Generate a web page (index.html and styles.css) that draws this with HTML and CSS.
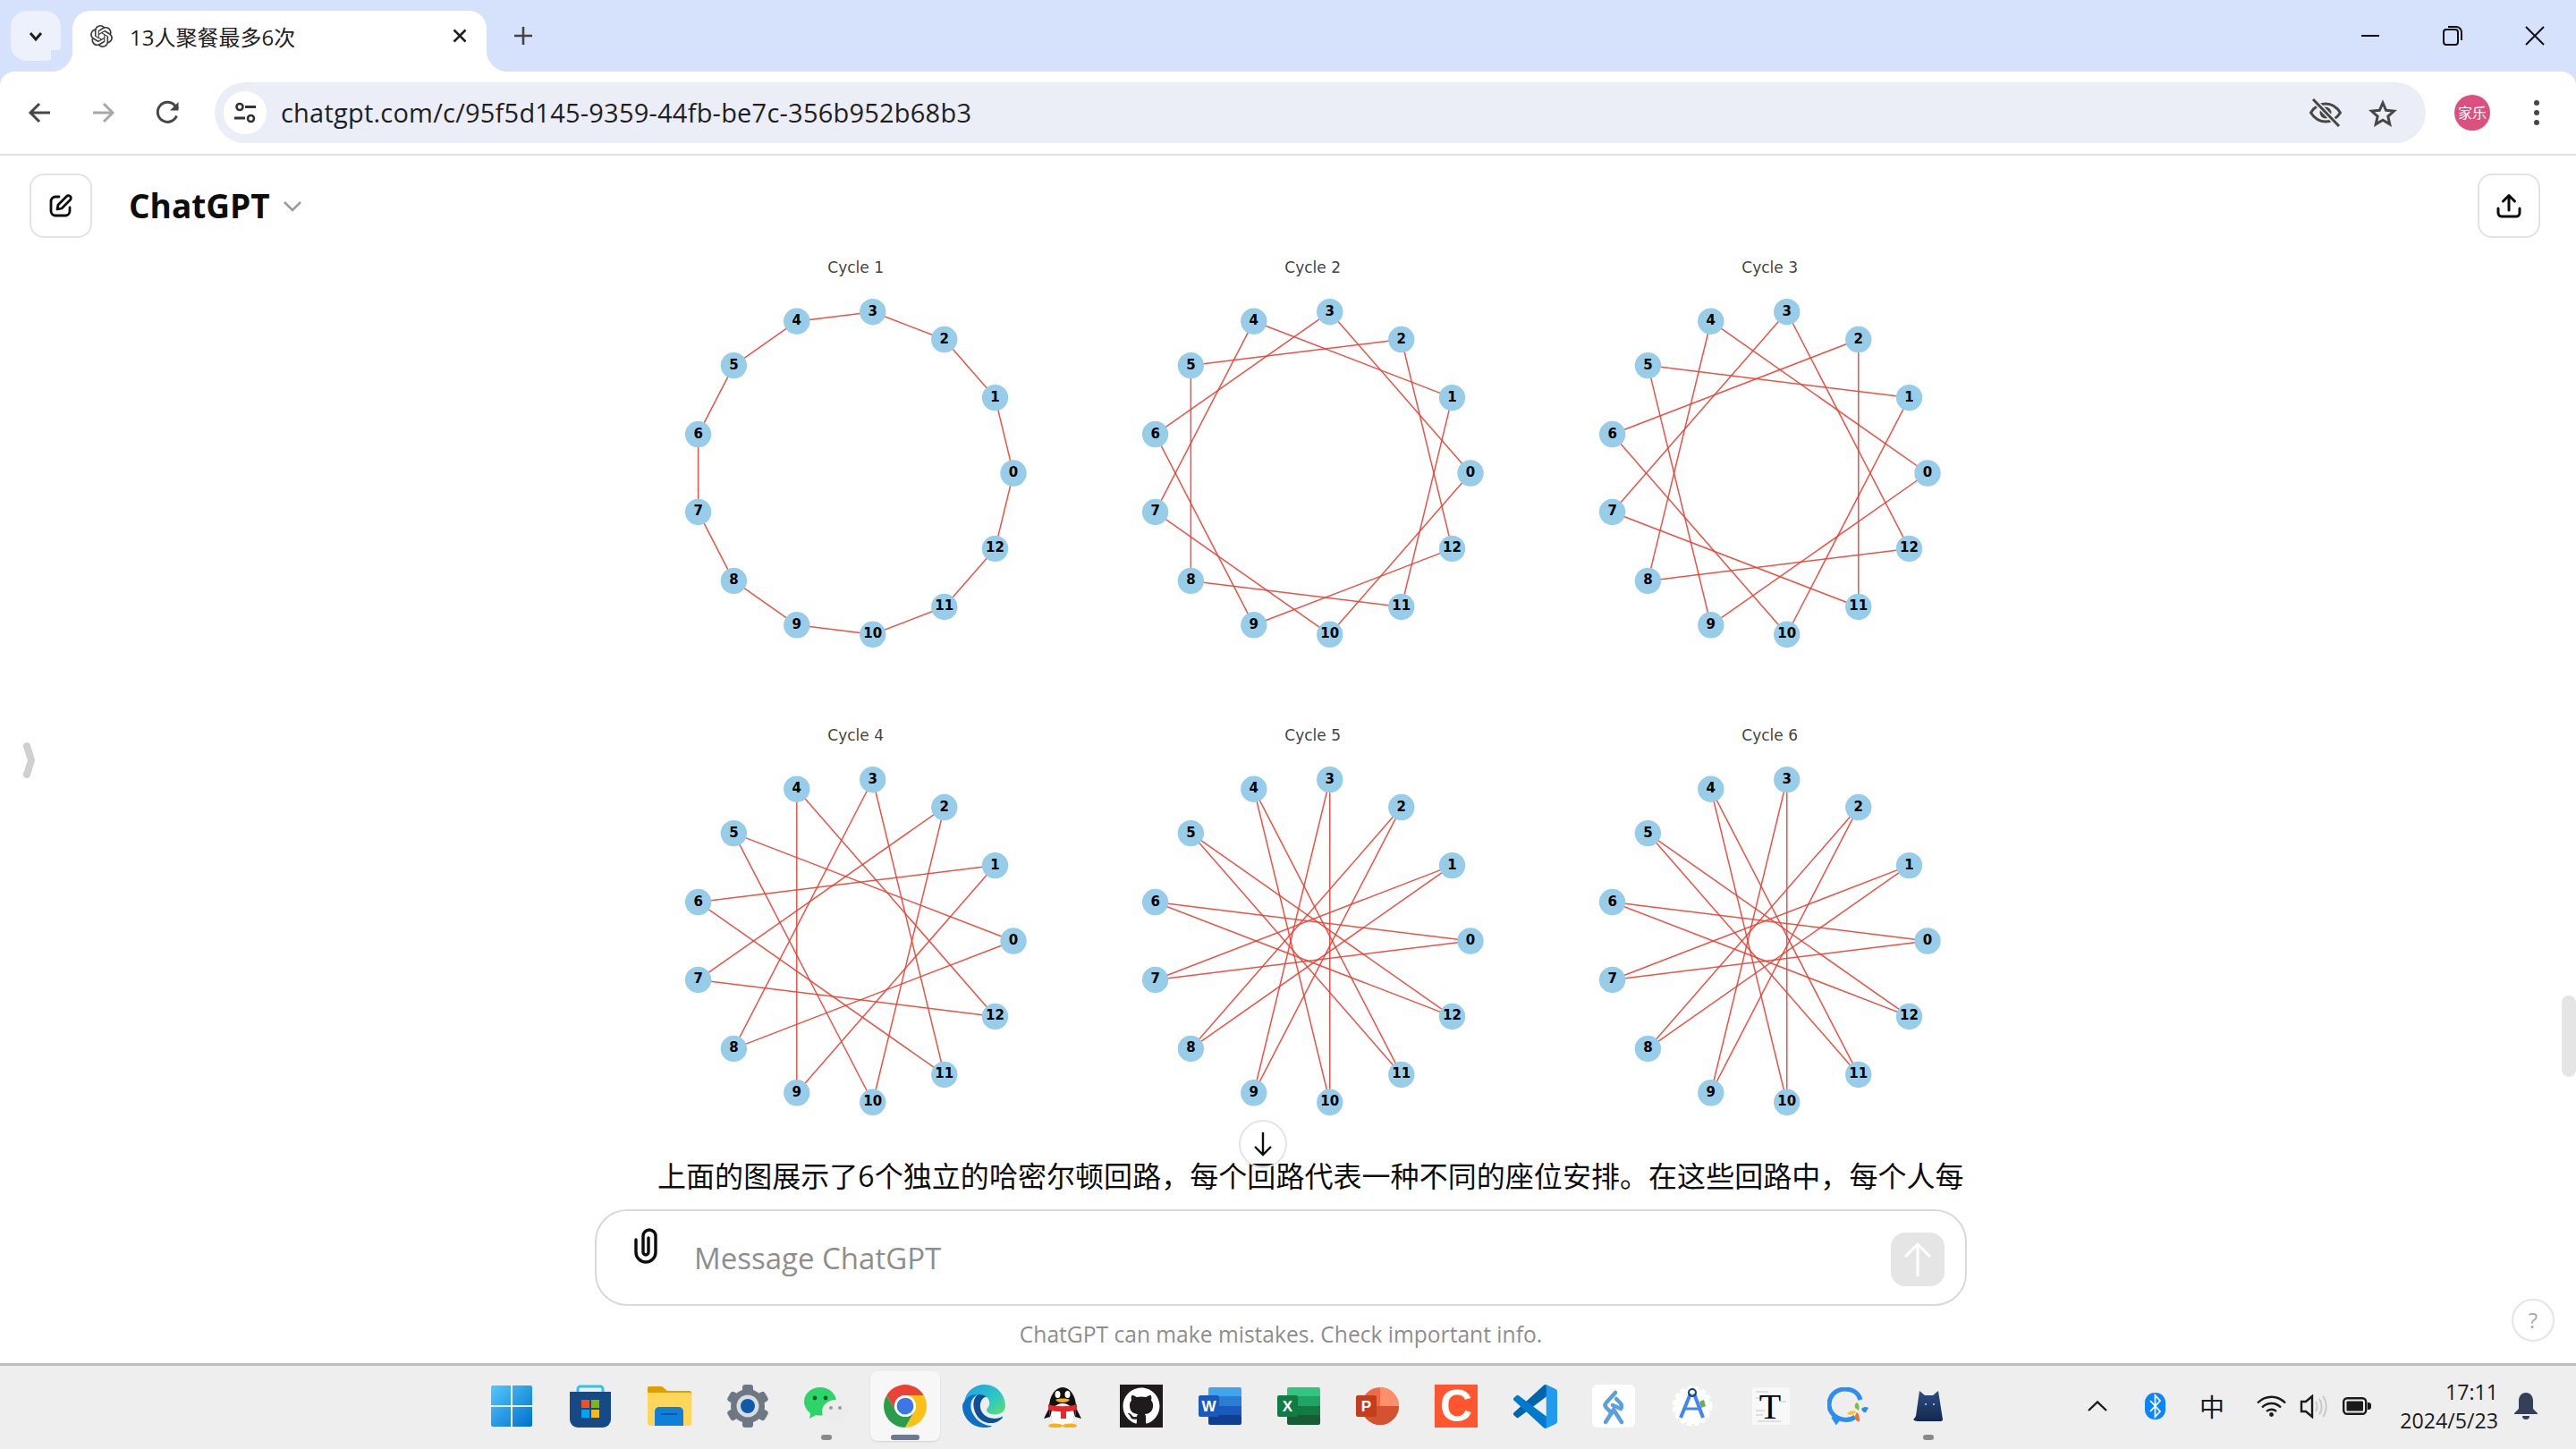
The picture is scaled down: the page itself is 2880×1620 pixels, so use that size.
FILE: index.html
```html
<!DOCTYPE html>
<html lang="zh-CN">
<head>
    <meta charset="UTF-8">
    <meta name="viewport" content="width=device-width, initial-scale=1.0">
    <title>13人聚餐最多6次</title>
    <link rel="stylesheet" href="styles.css">
</head>
<body>
    <div class="tabstrip">
        <div class="tab-list">
            <svg width="20" height="20" viewBox="0 0 20 20"><path d="M4 7l6 7 6-7" fill="none" stroke="#1f1f1f" stroke-width="3"/></svg>
        </div>
        <div class="tab">
            <svg width="25" height="25" viewBox="0 0 24 24"><path fill="#3c3c3c" d="M22.2819 9.8211a5.9847 5.9847 0 0 0-.5157-4.9108 6.0462 6.0462 0 0 0-6.5098-2.9A6.0651 6.0651 0 0 0 4.9807 4.1818a5.9847 5.9847 0 0 0-3.9977 2.9 6.0462 6.0462 0 0 0 .7427 7.0966 5.98 5.98 0 0 0 .511 4.9107 6.051 6.051 0 0 0 6.5146 2.9001A5.9847 5.9847 0 0 0 13.2599 24a6.0557 6.0557 0 0 0 5.7718-4.2058 5.9894 5.9894 0 0 0 3.9977-2.9001 6.0557 6.0557 0 0 0-.7475-7.0729zm-9.022 12.6081a4.4755 4.4755 0 0 1-2.8764-1.0408l.1419-.0804 4.7783-2.7582a.7948.7948 0 0 0 .3927-.6813v-6.7369l2.02 1.1686a.071.071 0 0 1 .038.052v5.5826a4.504 4.504 0 0 1-4.4945 4.4944zm-9.6607-4.1254a4.4708 4.4708 0 0 1-.5346-3.0137l.142.0852 4.783 2.7582a.7712.7712 0 0 0 .7806 0l5.8428-3.3685v2.3324a.0804.0804 0 0 1-.0332.0615L9.74 19.9502a4.4992 4.4992 0 0 1-6.1408-1.6464zM2.3408 7.8956a4.485 4.485 0 0 1 2.3655-1.9728V11.6a.7664.7664 0 0 0 .3879.6765l5.8144 3.3543-2.0201 1.1685a.0757.0757 0 0 1-.071 0l-4.8303-2.7865A4.504 4.504 0 0 1 2.3408 7.872zm16.5963 3.8558L13.1038 8.364 15.1192 7.2a.0757.0757 0 0 1 .071 0l4.8303 2.7913a4.4944 4.4944 0 0 1-.6765 8.1042v-5.6772a.79.79 0 0 0-.407-.667zm2.0107-3.0231l-.142-.0852-4.7735-2.7818a.7759.7759 0 0 0-.7854 0L9.409 9.2297V6.8974a.0662.0662 0 0 1 .0284-.0615l4.8303-2.7866a4.4992 4.4992 0 0 1 6.6802 4.66zM8.3065 12.863l-2.02-1.1638a.0804.0804 0 0 1-.038-.0567V6.0742a4.4992 4.4992 0 0 1 7.3757-3.4537l-.142.0805L8.704 5.459a.7948.7948 0 0 0-.3927.6813zm1.0976-2.3654l2.602-1.4998 2.6069 1.4998v2.9994l-2.5974 1.4997-2.6067-1.4997Z"/></svg>
            <span class="tab-title">13人聚餐最多6次</span>
            <svg class="tab-close" width="16" height="16" viewBox="0 0 16 16"><path d="M1.5 1.5l13 13M14.5 1.5l-13 13" stroke="#1f1f1f" stroke-width="2.6"/></svg>
        </div>
        <div class="new-tab">
            <svg width="22" height="22" viewBox="0 0 22 22"><path d="M11 1v20M1 11h20" stroke="#444" stroke-width="2.6"/></svg>
        </div>
        <div class="window-controls">
            <div class="window-btn"><svg width="22" height="22" viewBox="0 0 22 22"><path d="M1 11h20" stroke="#111" stroke-width="2"/></svg></div>
            <div class="window-btn"><svg width="22" height="22" viewBox="0 0 22 22"><rect x="1" y="4" width="16" height="17" rx="3" fill="none" stroke="#111" stroke-width="2"/><path d="M6 1h9a6 6 0 0 1 6 6v9" fill="none" stroke="#111" stroke-width="2"/></svg></div>
            <div class="window-btn"><svg width="22" height="22" viewBox="0 0 22 22"><path d="M1 1l20 20M21 1L1 21" stroke="#111" stroke-width="2"/></svg></div>
        </div>
    </div>

    <div class="toolbar">
        <div class="tool-btn"><svg width="26" height="24" viewBox="0 0 26 24"><path d="M25 12H3M13 2L3 12l10 10" fill="none" stroke="#474747" stroke-width="3"/></svg></div>
        <div class="tool-btn"><svg width="26" height="24" viewBox="0 0 26 24"><path d="M1 12h22M13 2l10 10-10 10" fill="none" stroke="#a8a8a8" stroke-width="3"/></svg></div>
        <div class="tool-btn"><svg width="28" height="28" viewBox="0 0 28 28"><path d="M23.5 17.5A11 11 0 1 1 21.5 6L25 9.5" fill="none" stroke="#474747" stroke-width="3"/><path d="M25.5 2v9.5H16z" fill="#474747"/></svg></div>
        <div class="address">
            <div class="site-icon">
                <svg width="26" height="26" viewBox="0 0 26 26"><circle cx="7" cy="6.5" r="3.5" fill="none" stroke="#333" stroke-width="2.6"/><path d="M13 6.5h12M1 19h12" stroke="#333" stroke-width="3"/><circle cx="19.5" cy="19.5" r="3.5" fill="none" stroke="#333" stroke-width="2.6"/></svg>
            </div>
            <span class="url">chatgpt.com/c/95f5d145-9359-44fb-be7c-356b952b68b3</span>
            <svg class="addr-eye" width="36" height="32" viewBox="0 0 36 32"><path d="M1.5 16C6 9 11.500 6 18 6s12 3 16.500 10C30 23 24.500 26 18 26S6 23 1.500 16z" fill="none" stroke="#474747" stroke-width="3"/><circle cx="18" cy="16" r="6.500" fill="#474747"/><path d="M4 1l29 30" stroke="#ebeef7" stroke-width="6"/><path d="M4 1l29 30" stroke="#474747" stroke-width="3"/></svg>
            <svg class="addr-star" width="32" height="31" viewBox="0 0 32 31"><path d="M16 4l3.600 8.300 9 .8-6.800 6 2 8.800L16 23.300 8.200 27.900l2-8.800-6.800-6 9-.8z" fill="none" stroke="#474747" stroke-width="3"/></svg>
        </div>
        <div class="tool-btn profile-btn"><span class="avatar">家乐</span></div>
        <div class="tool-btn"><svg width="8" height="30" viewBox="0 0 8 30"><circle cx="4" cy="4" r="3" fill="#474747"/><circle cx="4" cy="15" r="3" fill="#474747"/><circle cx="4" cy="26" r="3" fill="#474747"/></svg></div>
    </div>

    <main class="chat">
        <header class="chat-head">
            <div class="head-btn">
                <svg width="28" height="28" viewBox="0 0 28 28"><path d="M12 4H8a5 5 0 0 0-5 5v11a5 5 0 0 0 5 5h11a5 5 0 0 0 5-5v-4" fill="none" stroke="#0d0d0d" stroke-width="2.800" stroke-linecap="round"/><path d="M10 18l1-5L20.500 3.500a2.800 2.800 0 0 1 4 4L15 17z" fill="none" stroke="#0d0d0d" stroke-width="2.800" stroke-linejoin="round"/></svg>
            </div>
            <span class="model-name">ChatGPT</span>
            <svg class="model-caret" width="22" height="14" viewBox="0 0 22 14"><path d="M2 2l9 9 9-9" fill="none" stroke="#9b9b9b" stroke-width="2.600"/></svg>
            <div class="head-btn share-btn">
                <svg width="28" height="28" viewBox="0 0 28 28"><path d="M14 19V3M7.500 9L14 2.500 20.500 9" fill="none" stroke="#0d0d0d" stroke-width="3" stroke-linecap="round" stroke-linejoin="round"/><path d="M2 17v5a4 4 0 0 0 4 4h16a4 4 0 0 0 4-4v-5" fill="none" stroke="#0d0d0d" stroke-width="3" stroke-linecap="round"/></svg>
            </div>
        </header>

        <section class="thread">
            <div class="charts" id="charts"></div>
            <p class="answer">上面的图展示了6个独立的哈密尔顿回路，每个回路代表一种不同的座位安排。在这些回路中，每个人每</p>
        </section>

        <div class="composer-wrap">
            <div class="composer">
                <svg class="attach" width="31" height="42" viewBox="0 0 31 42"><path d="M4 14v14a11 11 0 0 0 22 0V10a7 7 0 0 0-14 0v18a3 3 0 0 0 6 0V12" fill="none" stroke="#0d0d0d" stroke-width="3.400" stroke-linecap="round"/></svg>
                <span class="placeholder">Message ChatGPT</span>
                <div class="send">
                    <svg width="34" height="40" viewBox="0 0 34 40"><path d="M17 39V3M3 17L17 3l14 14" fill="none" stroke="#fff" stroke-width="3"/></svg>
                </div>
            </div>
            <div class="disclaimer">ChatGPT can make mistakes. Check important info.</div>
        </div>

        <svg class="side-toggle" width="18" height="44" viewBox="0 0 18 44"><path d="M6 6l5 16-5 16" fill="none" stroke="#d0d0d0" stroke-width="8" stroke-linecap="round" stroke-linejoin="round"/></svg>
        <div class="scroll-down">
            <svg width="20" height="28" viewBox="0 0 20 28"><path d="M10 1v25M1 17l9 9 9-9" fill="none" stroke="#0d0d0d" stroke-width="2.400"/></svg>
        </div>
        <div class="help-btn">?</div>
        <div class="scrollbar"></div>
    </main>

    <footer class="taskbar">
        <div class="task-apps">
            <div class="task-app">
                <svg width="48" height="48" viewBox="0 0 48 48"><defs><linearGradient id="winBlue" x1="0" y1="0" x2="1" y2="1"><stop offset="0" stop-color="#54c8ff"/><stop offset="1" stop-color="#0070cc"/></linearGradient></defs><path fill="url(#winBlue)" d="M1 3a2 2 0 0 1 2-2h20v22H1zM25 1h20a2 2 0 0 1 2 2v20H25zM1 25h22v22H3a2 2 0 0 1-2-2zM25 25h22v20a2 2 0 0 1-2 2H25z"/></svg>
            </div>
            <div class="task-app">
                <svg width="48" height="48" viewBox="0 0 48 48"><path d="M10 12V5a3 3 0 0 1 3-3h22a3 3 0 0 1 3 3v7" fill="none" stroke="#2cc5f0" stroke-width="3"/><path d="M1 8h46v31a9 9 0 0 1-9 9H10a9 9 0 0 1-9-9z" fill="#174a85"/><rect x="14" y="17" width="9" height="9" fill="#f25022"/><rect x="25" y="17" width="9" height="9" fill="#7fba00"/><rect x="14" y="28" width="9" height="9" fill="#00a4ef"/><rect x="25" y="28" width="9" height="9" fill="#ffb900"/></svg>
            </div>
            <div class="task-app">
                <svg width="50" height="44" viewBox="0 0 50 44"><path d="M1 2a2 2 0 0 1 2-2h14l6 5h25a2 2 0 0 1 2 2v6H1z" fill="#d9a000"/><path d="M1 7h47a2 2 0 0 1 2 2v33a2 2 0 0 1-2 2H3a2 2 0 0 1-2-2z" fill="#ffd65c"/><path d="M9 44V28a5 5 0 0 1 5-5h22a5 5 0 0 1 5 5v16z" fill="#0f7fd8"/><path d="M16 31h18" stroke="#0b5aa3" stroke-width="2"/></svg>
            </div>
            <div class="task-app">
                <svg width="48" height="48" viewBox="0 0 48 48"><g fill="#6d7882"><rect x="18" y="0" width="12" height="48" rx="3"/><rect x="18" y="0" width="12" height="48" rx="3" transform="rotate(60 24 24)"/><rect x="18" y="0" width="12" height="48" rx="3" transform="rotate(120 24 24)"/><circle cx="24" cy="24" r="19"/></g><circle cx="24" cy="24" r="12.500" fill="#d7dde2"/><circle cx="24" cy="24" r="8" fill="#0f5aa8"/></svg>
            </div>
            <div class="task-app open">
                <svg width="50" height="42" viewBox="0 0 50 42"><path d="M18 0C8 0 0 7 0 16c0 5 3 10 7 13l-1 6 7-4c2 .5 3 .6 5 .6 10 0 18-7 18-15.600S28 0 18 0z" fill="#2dd469"/><circle cx="12" cy="12" r="2.400" fill="#0d5a2a"/><circle cx="24" cy="12" r="2.400" fill="#0d5a2a"/><path d="M35 14c-8 0-15 6-15 13s7 13 15 13c1.500 0 3-.2 4-.5l5 2.500-1-5c4-2.500 7-6 7-10 0-7-7-13-15-13z" fill="#ececec"/><circle cx="30" cy="23" r="2" fill="#9a9a9a"/><circle cx="40" cy="23" r="2" fill="#9a9a9a"/></svg>
            </div>
            <div class="task-app active">
                <svg width="50" height="50" viewBox="0 0 48 48"><path d="M4.100 12.500A23 23 0 0 1 43.900 12.500H24A11.500 11.500 0 0 0 14.040 29.750z" fill="#ea4335"/><path d="M4.100 12.500A23 23 0 0 0 24 47L33.960 29.750A11.500 11.500 0 0 1 14.040 29.750z" fill="#2a9d4a"/><path d="M24 47A23 23 0 0 0 43.900 12.500H24A11.500 11.500 0 0 1 33.960 29.750z" fill="#fbc116"/><circle cx="24" cy="24" r="11.500" fill="#fff"/><circle cx="24" cy="24" r="9" fill="#3b78e7"/></svg>
            </div>
            <div class="task-app">
                <svg width="50" height="50" viewBox="0 0 48 48"><defs><linearGradient id="edgeTop" x1="0" y1="0" x2="1" y2="1"><stop offset="0" stop-color="#1aa0e8"/><stop offset=".6" stop-color="#30c8c0"/><stop offset="1" stop-color="#63df6e"/></linearGradient></defs><path fill="url(#edgeTop)" d="M3 19C5 8 14 1 25 1c13 0 22 11 22 23 0 6-5 9-11 9-5 0-9-2-9-5 0-2 3-3 3-7 0-6-6-10-13-9C10 13 4 16 3 19z"/><path fill="#0d6fc6" d="M3 19c3-5 8-8 14-7-7 3-9 12-5 20 4 8 13 14 21 13-3 2-6 2-9 2C11 47 1 36 1 24c0-2 1-4 2-5z"/><path fill="#0f4f9a" d="M17 12c-6 5-5 16 0 23s15 9 21 6c4-2 7-5 6-6-3 2-7 3-12 2-7-1-12-7-12-13 0-5 3-10 7-10-3-2-7-3-10-2z"/></svg>
            </div>
            <div class="task-app">
                <svg width="42" height="48" viewBox="0 0 42 48"><ellipse cx="21" cy="25" rx="15" ry="22" fill="#111"/><path d="M6 26L0 38l7-2zM36 26l6 12-7-2z" fill="#111"/><ellipse cx="21" cy="34" rx="13" ry="13" fill="#fff"/><ellipse cx="15.500" cy="11" rx="3" ry="4" fill="#fff"/><ellipse cx="26.500" cy="11" rx="3" ry="4" fill="#fff"/><path d="M13 17c3-2 13-2 16 0-3 4-13 4-16 0z" fill="#f7b21a"/><path d="M5 22c8 3 24 3 32 0v6c-5 2-9 2-12 2v8h-6v-8c-4 0-9 0-14-2z" fill="#e8262c"/><ellipse cx="13" cy="46" rx="8" ry="2.500" fill="#f7b21a"/><ellipse cx="29" cy="46" rx="8" ry="2.500" fill="#f7b21a"/></svg>
            </div>
            <div class="task-app">
                <svg width="48" height="48" viewBox="0 0 48 48"><rect width="48" height="48" fill="#1f1b1c"/><path transform="translate(3.500 3.500) scale(2.560)" fill="#fff" d="M8 0C3.580 0 0 3.580 0 8c0 3.540 2.290 6.530 5.470 7.590.4.070.55-.17.55-.38 0-.19-.01-.82-.01-1.490-2.010.37-2.530-.49-2.690-.94-.09-.23-.48-.94-.82-1.130-.28-.15-.68-.52-.01-.53.63-.01 1.080.58 1.230.82.720 1.210 1.870.87 2.330.66.070-.52.28-.87.51-1.070-1.780-.2-3.640-.89-3.640-3.950 0-.87.31-1.590.82-2.150-.08-.2-.36-1.020.08-2.120 0 0 .67-.21 2.200.82.64-.18 1.320-.27 2-.27.68 0 1.360.09 2 .27 1.530-1.040 2.200-.82 2.200-.82.44 1.100.16 1.920.08 2.120.51.56.82 1.270.82 2.150 0 3.070-1.870 3.750-3.650 3.950.29.25.54.73.54 1.480 0 1.070-.01 1.930-.01 2.200 0 .21.15.46.55.38A8.013 8.013 0 0016 8c0-4.420-3.580-8-8-8z"/></svg>
            </div>
            <div class="task-app">
                <svg width="48" height="42" viewBox="0 0 48 42"><rect x="11" y="0" width="37" height="11" rx="2" fill="#41a5ee"/><rect x="11" y="10" width="37" height="11" fill="#2b7cd3"/><rect x="11" y="21" width="37" height="11" fill="#185abd"/><rect x="11" y="31" width="37" height="11" rx="2" fill="#103f91"/><rect x="0" y="9" width="23" height="24" rx="2" fill="#185abd"/><text class="app-letter" x="11.500" y="27" text-anchor="middle">W</text></svg>
            </div>
            <div class="task-app">
                <svg width="48" height="42" viewBox="0 0 48 42"><rect x="11" y="0" width="37" height="11" rx="2" fill="#33c481"/><rect x="11" y="10" width="37" height="11" fill="#21a366"/><rect x="11" y="21" width="37" height="11" fill="#107c41"/><rect x="11" y="31" width="37" height="11" rx="2" fill="#185c37"/><rect x="0" y="9" width="23" height="24" rx="2" fill="#107c41"/><text class="app-letter" x="11.500" y="27" text-anchor="middle">X</text></svg>
            </div>
            <div class="task-app">
                <svg width="48" height="42" viewBox="0 0 48 42"><circle cx="27" cy="21" r="21" fill="#ed6c47"/><path d="M27 0a21 21 0 0 1 21 21H27z" fill="#ff8f6b"/><path d="M6 21a21 21 0 0 0 42 0z" fill="#d35230"/><rect x="0" y="9" width="23" height="24" rx="2" fill="#c43e1c"/><text class="app-letter" x="11.500" y="27" text-anchor="middle">P</text></svg>
            </div>
            <div class="task-app">
                <svg width="48" height="60" viewBox="0 -6 48 60"><rect width="48" height="48" fill="#ff5630"/><text class="app-c" x="24" y="41" text-anchor="middle">C</text></svg>
            </div>
            <div class="task-app">
                <svg width="49" height="49" viewBox="0 0 100 100"><path fill="#0065a9" d="M96.460 10.800 75.860.9a6.230 6.230 0 0 0-7.100 1.200L1.300 63.660a4.170 4.170 0 0 0 .01 6.160l5.500 5a4.170 4.170 0 0 0 5.320.23L93.400 13.800c2.720-2.070 6.600-.13 6.600 3.290v-.24a6.250 6.250 0 0 0-3.540-5.630z"/><path fill="#007acc" d="M96.460 89.200 75.860 99.100a6.230 6.230 0 0 1-7.100-1.200L1.300 36.340a4.170 4.170 0 0 1 .01-6.160l5.500-5a4.170 4.170 0 0 1 5.320-.23L93.400 86.200c2.720 2.070 6.600.13 6.600-3.290v.24a6.250 6.250 0 0 1-3.540 5.630z"/><path fill="#1f9cf0" d="M75.860 99.130a6.230 6.230 0 0 1-7.100-1.200c2.300 2.300 6.240.67 6.240-2.580V4.650c0-3.250-3.940-4.880-6.240-2.580a6.230 6.230 0 0 1 7.100-1.200l20.600 9.900A6.250 6.250 0 0 1 100 16.400v67.200a6.250 6.250 0 0 1-3.540 5.630z"/></svg>
            </div>
            <div class="task-app">
                <svg width="48" height="48" viewBox="0 0 48 48"><rect width="48" height="48" rx="6" fill="#fff"/><path d="M26 9L16 20c-2 2-2 4 0 6l6 6M23 23l9 4c2-3 1-5-1-7l-4-4" fill="none" stroke="#5b9fdc" stroke-width="4.500" stroke-linecap="round"/><path d="M15 42l9-14 9 14" fill="none" stroke="#5b9fdc" stroke-width="4.500" stroke-linecap="round"/></svg>
            </div>
            <div class="task-app">
                <svg width="46" height="46" viewBox="0 0 46 46"><circle cx="23" cy="23" r="20" fill="#fff" stroke="#fff" stroke-width="5" stroke-dasharray="5 3"/><path d="M10 36L21 9M25 9l10 27" stroke="#4285f4" stroke-width="4"/><path d="M15 26h16" stroke="#4285f4" stroke-width="3"/><circle cx="23" cy="8" r="4" fill="none" stroke="#1b3f7a" stroke-width="2"/><path d="M31 18l5-2 2 7-5 2z" fill="#6bb04a"/></svg>
            </div>
            <div class="task-app">
                <svg width="42" height="48" viewBox="0 -3 42 48"><rect width="42" height="42" rx="2" fill="#f8f8f8"/><path d="M4 5h14M4 12h8M30 16h8M4 26h10M4 31h8M6 38h26" stroke="#d6d6d6" stroke-width="1.500"/><text class="app-t" x="20" y="35" text-anchor="middle">T</text></svg>
            </div>
            <div class="task-app">
                <svg width="50" height="42" viewBox="0 0 50 42"><path d="M31 33C24 39 8 37 3 25-1 12 8 2 20 2c9 0 15 5 17 12" fill="none" stroke="#2a8ff0" stroke-width="5"/><path d="M6 33l4 6 4-5" fill="none" stroke="#2a8ff0" stroke-width="4"/><path d="M33 17c3 2 3 6 2 9l-4-3c-1-2 0-5 2-6z" fill="#7ac142"/><path d="M38 24c2-2 5-3 8-1l-3 5c-2 1-4-1-5-4z" fill="#2a8ff0"/><path d="M33 28c2 1 3 5 3 10-3 1-5-2-5-5 0-2 1-4 2-5z" fill="#f36f38"/><path d="M22 30c1-3 6-5 10-3-1 3-6 5-10 3z" fill="#ffc31f"/></svg>
            </div>
            <div class="task-app open">
                <svg width="34" height="34" viewBox="0 0 34 34"><defs><linearGradient id="catBlue" x1="0" y1="0" x2="0" y2="1"><stop offset="0" stop-color="#2c4d82"/><stop offset="1" stop-color="#14284f"/></linearGradient></defs><path fill="url(#catBlue)" d="M7 0l6 5h9l6-5 5 32c0 1-1 2-2 2H5c-2 0-4-1-5-2 1-1 2-2 3-4z"/><circle cx="14" cy="15" r="1" fill="#cfd8e6"/><circle cx="23" cy="15" r="1" fill="#cfd8e6"/></svg>
            </div>
        </div>

        <div class="tray">
            <svg class="tray-caret" width="22" height="12" viewBox="0 0 22 12"><path d="M1 11L11 1.500 21 11" fill="none" stroke="#1a1a1a" stroke-width="2.400"/></svg>
            <svg class="tray-bt" width="23" height="30" viewBox="0 0 23 30"><rect width="23" height="30" rx="11" fill="#0a84ff"/><path d="M6 9l11 12-5.500 6V3L17 9 6 21" fill="none" stroke="#fff" stroke-width="1.800"/></svg>
            <span class="tray-ime">中</span>
            <svg class="tray-wifi" width="33" height="24" viewBox="0 0 33 24"><path d="M1 8.500c9-9 22-9 31 0M6 13.500c6-6 15-6 21 0M11 18c3-3 8-3 11 0" fill="none" stroke="#1a1a1a" stroke-width="2.400"/><circle cx="16.500" cy="21.500" r="2.400" fill="#1a1a1a"/></svg>
            <svg class="tray-sound" width="32" height="27" viewBox="0 0 32 27"><path d="M14 2v23l-7-6H2V8h5z" fill="none" stroke="#1a1a1a" stroke-width="2.400"/><path d="M18 8c2 3 2 8 0 11M22 5c3.500 5 3.500 13 0 17M26 2c5 7 5 16 0 23" fill="none" stroke="#c9c9c9" stroke-width="2"/></svg>
            <svg class="tray-battery" width="32" height="20" viewBox="0 0 32 20"><rect x="1.200" y="1.200" width="25" height="17.600" rx="4" fill="none" stroke="#1a1a1a" stroke-width="2.400"/><rect x="4.500" y="4.500" width="18.500" height="11" rx="1" fill="#1a1a1a"/><path d="M28 6h1a3 3 0 0 1 3 3v2a3 3 0 0 1-3 3h-1z" fill="#1a1a1a"/></svg>
            <div class="tray-clock">
                <span>17:11</span>
                <span>2024/5/23</span>
            </div>
            <svg class="tray-bell" width="26" height="30" viewBox="0 0 26 30"><path d="M13 0c-5 0-8 4-8 9v9l-5 5v1h26v-1l-5-5V9c0-5-3-9-8-9z" fill="#353f58"/><path d="M9 26h8a4 4 0 0 1-8 0z" fill="#353f58"/></svg>
        </div>
    </footer>

    <script src="script.js"></script>
</body>
</html>
```
FILE: styles.css
```css
* {
    box-sizing: border-box;
}

body {
    margin: 0;
    height: 1620px;
    overflow: hidden;
    display: flex;
    flex-direction: column;
    background: #d6e2fb;
    font-family: "Open Sans", "Noto Sans CJK SC", sans-serif;
    color: #0d0d0d;
}

/* browser top */
.tabstrip {
    height: 80px;
    flex: none;
    display: flex;
    padding: 12px 0 0 12px;
    background: #d6e2fb;
}

.tab-list {
    width: 56px;
    height: 56px;
    border-radius: 18px;
    background: #ecf1fc;
    display: flex;
    align-items: center;
    justify-content: center;
}

.tab {
    position: relative;
    z-index: 1;
    width: 463px;
    height: 68px;
    margin-left: 13px;
    padding: 0 22px 12px 20px;
    display: flex;
    align-items: center;
    background: #fff;
    border-radius: 20px 20px 0 0;
}

.tab::before,
.tab::after {
    content: "";
    position: absolute;
    bottom: 0;
    width: 24px;
    height: 24px;
}

.tab::before {
    left: -24px;
    background: radial-gradient(circle at 0 0, #d6e2fb 24px, #fff 24.500px);
}

.tab::after {
    right: -24px;
    background: radial-gradient(circle at 100% 0, #d6e2fb 24px, #fff 24.500px);
}

.tab-title {
    margin-left: 19px;
    font-size: 24px;
    color: #1f1f1f;
}

.tab-close {
    margin-left: auto;
}

.new-tab {
    width: 56px;
    height: 56px;
    margin-left: 13px;
    display: flex;
    align-items: center;
    justify-content: center;
}

.window-controls {
    margin-left: auto;
    display: flex;
}

.window-btn {
    width: 92px;
    height: 56px;
    display: flex;
    align-items: center;
    justify-content: center;
}

.toolbar {
    height: 94px;
    flex: none;
    display: flex;
    align-items: center;
    padding: 0 8px;
    background: #fff;
    border-bottom: 2px solid #e0e0e0;
    border-radius: 16px 16px 0 0;
}

.tool-btn {
    width: 72px;
    height: 72px;
    flex: none;
    display: flex;
    align-items: center;
    justify-content: center;
}

.address {
    flex: 1;
    height: 68px;
    margin-left: 16px;
    padding: 0 32px 0 10px;
    display: flex;
    align-items: center;
    border-radius: 34px;
    background: #ebeef7;
}

.site-icon {
    width: 48px;
    height: 48px;
    border-radius: 50%;
    background: #fff;
    display: flex;
    align-items: center;
    justify-content: center;
}

.url {
    margin-left: 16px;
    padding-bottom: 2px;
    font-size: 29px;
    letter-spacing: .22px;
    color: #1f1f1f;
}

.addr-eye {
    margin-left: auto;
}

.addr-star {
    margin-left: 30px;
}

.profile-btn {
    margin-left: 16px;
}

.avatar {
    width: 40px;
    height: 40px;
    border-radius: 50%;
    background: #dc4f7e;
    color: #fff;
    font-size: 16px;
    line-height: 40px;
    text-align: center;
}

/* chat page */
.chat {
    position: relative;
    flex: 1;
    min-height: 0;
    display: flex;
    flex-direction: column;
    background: #fff;
}

.chat-head {
    height: 96px;
    flex: none;
    display: flex;
    align-items: flex-start;
    padding: 20px 40px 0 33px;
}

.head-btn {
    width: 70px;
    height: 72px;
    border: 2px solid #e3e3e3;
    border-radius: 16px;
    display: flex;
    align-items: center;
    justify-content: center;
}

.model-name {
    margin-left: 41px;
    font-size: 37px;
    font-weight: 700;
    line-height: 72px;
}

.model-caret {
    margin: 30px 0 0 14px;
}

.share-btn {
    margin-left: auto;
}

.thread {
    flex: 1;
    min-height: 0;
    overflow: hidden;
    padding-left: 700px;
}

.charts {
    display: grid;
    grid-template-columns: repeat(3, 511px);
    grid-auto-rows: 490px;
    row-gap: 33.300px;
}

.chart-svg {
    display: block;
}

.chart-title {
    font: 17px "DejaVu Sans", sans-serif;
    fill: #444;
    text-anchor: middle;
}

.chart-edge {
    stroke: #eb4034;
    stroke-width: 1.500;
    opacity: .9;
}

.chart-node {
    fill: #97cde9;
}

.chart-label {
    font: 700 15px "DejaVu Sans", sans-serif;
    fill: #000;
    text-anchor: middle;
}

.answer {
    margin: 3.700px 0 0 35px;
    font-size: 32px;
    letter-spacing: .05px;
    line-height: 56px;
    white-space: nowrap;
    color: #0d0d0d;
}

.composer-wrap {
    flex: none;
    width: 1534px;
    margin-left: 665px;
}

.composer {
    height: 108px;
    display: flex;
    align-items: center;
    border: 2px solid #d9d9d9;
    border-radius: 36px;
}

.attach {
    align-self: flex-start;
    margin: 18px 0 0 40px;
}

.placeholder {
    margin-left: 38px;
    font-size: 33px;
    color: #8e8e8e;
}

.send {
    width: 60px;
    height: 60px;
    margin: 4px 23px 0 auto;
    border-radius: 16px;
    background: #e5e5e5;
    display: flex;
    align-items: center;
    justify-content: center;
}

.disclaimer {
    height: 64px;
    padding-top: 16px;
    font-size: 24.600px;
    line-height: 32px;
    text-align: center;
    color: #8e8e8e;
}

.side-toggle {
    position: absolute;
    left: 24px;
    top: 654px;
}

.scroll-down {
    position: absolute;
    left: 1385px;
    top: 1078px;
    width: 54px;
    height: 54px;
    border: 2px solid #e5e5e5;
    border-radius: 50%;
    display: flex;
    align-items: center;
    justify-content: center;
}

.help-btn {
    position: absolute;
    left: 2808px;
    top: 1278px;
    width: 48px;
    height: 48px;
    border: 2px solid #e5e5e5;
    border-radius: 50%;
    color: #aaa;
    font-size: 24px;
    line-height: 44px;
    text-align: center;
}

.scrollbar {
    position: absolute;
    right: 0;
    top: 939px;
    width: 16px;
    height: 91px;
    border-radius: 8px;
    background: #e5e5e5;
}

/* windows taskbar */
.taskbar {
    height: 96px;
    flex: none;
    display: flex;
    padding: 6px 43px 0 528px;
    background: #eeeeee;
    border-top: 3px solid #bdbdbd;
}

.task-apps {
    display: flex;
}

.task-app {
    position: relative;
    width: 88px;
    height: 78px;
    display: flex;
    align-items: center;
    justify-content: center;
    border-radius: 8px;
}

.task-app.active {
    width: 78px;
    margin: 0 5px;
    background: #f7f7f7;
    box-shadow: 0 1px 2px rgba(0,0,0,0.12);
}

.task-app.open::after,
.task-app.active::after {
    content: "";
    position: absolute;
    bottom: 1px;
    left: 50%;
    width: 12px;
    height: 6px;
    margin-left: -6px;
    border-radius: 3px;
    background: #8a8a8a;
}

.task-app.active::after {
    width: 32px;
    margin-left: -16px;
    background: #6b7a90;
}

.app-letter {
    font: 700 17px "Liberation Sans", sans-serif;
    fill: #fff;
}

.app-c {
    font: 700 50px "Liberation Sans", sans-serif;
    fill: #fff;
}

.app-t {
    font: 400 40px "Liberation Serif", serif;
    fill: #000;
}

.tray {
    margin-left: auto;
    display: flex;
    align-items: center;
    height: 78px;
}

.tray-bt {
    margin-left: 42px;
}

.tray-ime {
    margin-left: 38px;
    font-size: 28px;
    color: #1a1a1a;
}

.tray-wifi {
    margin-left: 36px;
}

.tray-sound {
    margin-left: 15px;
}

.tray-battery {
    margin-left: 16px;
}

.tray-clock {
    margin-left: 32px;
    width: 110px;
    display: flex;
    flex-direction: column;
    align-items: flex-end;
    font-size: 23.200px;
    line-height: 32px;
    color: #1a1a1a;
    white-space: nowrap;
}

.tray-bell {
    margin-left: 18px;
}
```
FILE: script.js
```js
// steps between seats for each of the six cycles
const cycleSteps = [1, 3, 4, 5, 6, 7];
const seatCount = 13;
const svgNS = 'http://www.w3.org/2000/svg';

function addShape(parent, tag, attrs, text) {
    const el = document.createElementNS(svgNS, tag);
    for (const key in attrs) {
        el.setAttribute(key, attrs[key]);
    }
    if (text !== undefined) {
        el.textContent = text;
    }
    parent.appendChild(el);
}

function seatPoint(i) {
    const angle = (2 * Math.PI * i) / seatCount;
    return {
        x: 254.2 + 178.8 * Math.cos(angle),
        y: 259 - 181.6 * Math.sin(angle)
    };
}

function drawCycle(step, index) {
    const svg = document.createElementNS(svgNS, 'svg');
    svg.setAttribute('class', 'chart-svg');
    svg.setAttribute('width', 511);
    svg.setAttribute('height', 490);
    svg.setAttribute('viewBox', '0 0 511 490');

    addShape(svg, 'text', { class: 'chart-title', x: 256.7, y: 35 }, 'Cycle ' + (index + 1));

    for (let i = 0; i < seatCount; i++) {
        const a = seatPoint(i);
        const b = seatPoint((i + step) % seatCount);
        addShape(svg, 'line', { class: 'chart-edge', x1: a.x, y1: a.y, x2: b.x, y2: b.y });
    }

    for (let i = 0; i < seatCount; i++) {
        const p = seatPoint(i);
        addShape(svg, 'circle', { class: 'chart-node', cx: p.x, cy: p.y, r: 14.7 });
        addShape(svg, 'text', { class: 'chart-label', x: p.x, y: p.y + 4 }, i);
    }

    document.getElementById('charts').appendChild(svg);
}

cycleSteps.forEach(drawCycle);
```
